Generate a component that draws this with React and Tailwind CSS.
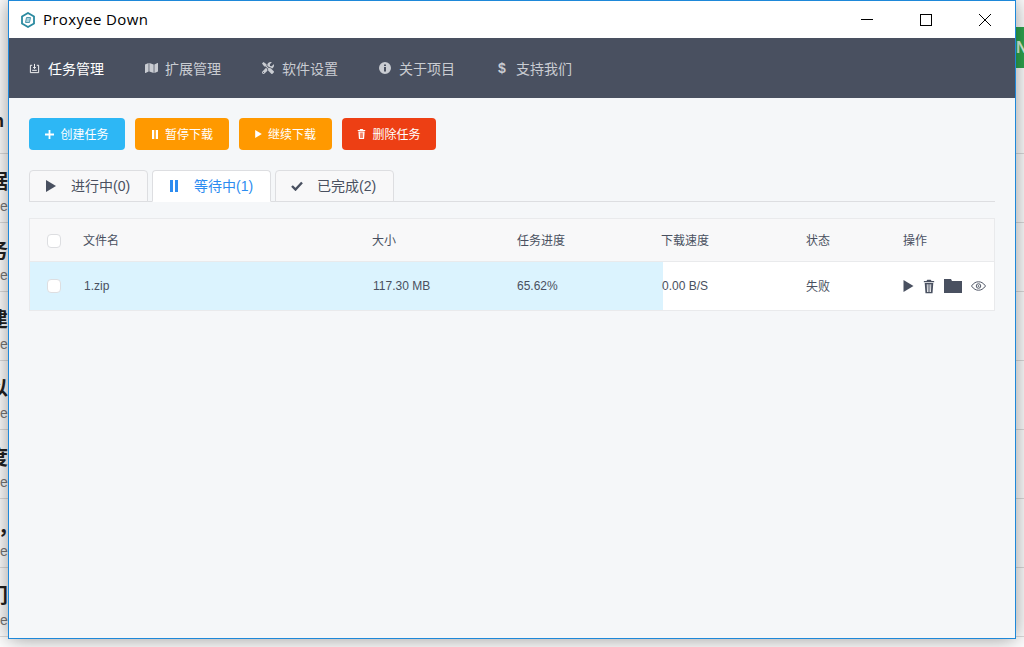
import React from "react";
import {FaMap, FaTools} from "react-icons/fa";

const cjk = "font-['Liberation_Sans','Noto_Sans_CJK_SC',sans-serif]";

// Background page rows that peek out behind the window
const behind = [
    {char: "据", offset: "-ml-[12px]"},
    {char: "务", offset: "-ml-[12px]"},
    {char: "建", offset: "-ml-[12px]"},
    {char: "以", offset: "-ml-[12px]"},
    {char: "度", offset: "-ml-[12px]"},
    {char: "，", offset: "-ml-[2px]"},
    {char: "门", offset: "-ml-[12px]"},
];

function PlayIcon({className}){
    return <svg viewBox="0 0 10 12" className={className} fill="currentColor"><path d="M0 0L10 6L0 12Z"/></svg>;
}

function PauseIcon({className}){
    return <svg viewBox="0 0 10 12" className={className} fill="currentColor"><path d="M1 0h3v12H1zM6 0h3v12H6z"/></svg>;
}

function TrashIcon({className}){
    return (
        <svg viewBox="0 0 14 16" className={className} fill="currentColor">
            <path d="M5 0h4l1 1.500h3V3H1V1.500h3zM2 4h10l-.9 12H2.900zM4.400 5.500l.3 9h1l-.3-9zM6.500 5.500v9h1v-9zM8.600 5.500l-.3 9h1l.3-9z" fillRule="evenodd"/>
        </svg>
    );
}

function NavItem({icon, label, active}){
    return (
        <div className={`flex items-center gap-[8px] ${active ? "text-white" : "text-[#c9ccd2]"}`}>
            <span className="flex w-[12px] justify-center">{icon}</span>
            <span className="pt-[1px] text-sm">{label}</span>
        </div>
    );
}

function ActionButton({color, icon, label, width}){
    return (
        <button className={`flex h-8 items-center justify-center gap-[6px] rounded text-xs text-white ${color} ${width}`}>
            {icon}
            <span className="pt-[1px]">{label}</span>
        </button>
    );
}

function Tab({icon, label, count, active}){
    return (
        <div className={`-mb-[1px] flex h-[32px] w-[119px] items-center gap-[15px] rounded-t border border-[#dddee1] pl-[16px] text-sm ${active ? "relative z-10 border-b-white bg-white text-[#2d8cf0]" : "bg-[#f8f8f9] text-[#495060]"}`}>
            <span className="flex w-[10px] justify-center">{icon}</span>
            <span>{label}{count}</span>
        </div>
    );
}

function Checkbox(){
    return <span className="block h-[14px] w-[14px] rounded-sm border border-[#dddee1] bg-white"></span>;
}

export default function App(){
    return (
        <div className={`relative h-[647px] w-[1024px] overflow-hidden bg-[#f7f7f8] ${cjk}`}>
            {/* Page behind the window */}
            <div className="flex h-full flex-col bg-white">
                <div className="flex h-[154px] flex-col justify-end border-b border-[#dcdcdc] pb-[18px]">
                    <span className="-ml-[7px] text-lg font-bold text-[#222]">h</span>
                </div>
                {behind.map((row)=>(
                    <div key={row.char} className="flex h-[69px] flex-col border-b border-[#dcdcdc] pt-[14px]">
                        <span className={`h-[28px] text-xl leading-[28px] font-bold text-[#222] ${row.offset}`}>{row.char}</span>
                        <span className="pt-[1px] text-sm leading-[18px] text-[#777]">e</span>
                    </div>
                ))}
            </div>

            {/* Green button on the page behind */}
            <div className="absolute top-[27px] right-0 flex h-[41px] w-[8px] items-center overflow-hidden bg-[#2ea64f] text-base font-bold text-[#d8f5df]">N</div>

            {/* Window */}
            <div className="absolute top-0 left-[8px] flex h-[639px] w-[1008px] flex-col border border-[#1e88d9] bg-[#f5f7f9] shadow-[0_0_20px_rgba(0,0,0,0.42)]">
                {/* Title bar */}
                <div className="flex h-[37px] items-center bg-white pl-[11px]">
                    <svg viewBox="0 0 16 16" className="h-[16px] w-[16px]" fill="none">
                        <path d="M8 1l6 3.500v7L8 15l-6-3.500v-7z" stroke="#2a8aa0" strokeWidth="1.800"/>
                        <path d="M5.500 10.500l1-5h4l-1 5z" fill="#a9d3de" stroke="#4f97ad" strokeWidth="1"/>
                    </svg>
                    <span className="ml-[7px] font-['Open_Sans',sans-serif] text-[15px] tracking-[0.35px] text-black">Proxyee Down</span>
                    <div className="ml-auto flex h-full items-center pr-[1px]">
                        <div className="flex w-[59px] justify-center"><span className="block h-[1px] w-[12px] bg-black"></span></div>
                        <div className="flex w-[59px] justify-center"><span className="block h-[12px] w-[12px] border border-black"></span></div>
                        <div className="flex w-[59px] justify-center">
                            <svg viewBox="0 0 12 12" className="h-[12px] w-[12px]" stroke="black" strokeWidth="1"><path d="M0 0L12 12M12 0L0 12"/></svg>
                        </div>
                    </div>
                </div>

                {/* Nav */}
                <div className="flex h-[60px] items-center gap-[41px] bg-[#495060] pl-[19px]">
                    <NavItem active label="任务管理" icon={
                        <svg viewBox="0 0 12 12" className="h-[11px] w-[11px]" fill="none" stroke="currentColor"><path d="M3.500 2.500H1.500v8h9v-8H8.500M6 1v5M4.500 4.500L6 6l1.500-1.500M3.500 8h5"/></svg>
                    }/>
                    <NavItem label="扩展管理" icon={<FaMap className="h-[12px] w-[13px] shrink-0"/>}/>
                    <NavItem label="软件设置" icon={<FaTools className="h-[12px] w-[12px] shrink-0"/>}/>
                    <NavItem label="关于项目" icon={
                        <svg viewBox="0 0 12 12" className="h-[12px] w-[12px]" fill="currentColor"><path fillRule="evenodd" d="M6 0a6 6 0 1 1 0 12A6 6 0 0 1 6 0zM5 2.500v1.500h2V2.500zM5 5v4.500h2V5z"/></svg>
                    }/>
                    <NavItem label="支持我们" icon={<span className="text-sm font-bold">$</span>}/>
                </div>

                {/* Content */}
                <div className="flex flex-1 flex-col px-[20px] pt-[20px]">
                    <div className="flex gap-[10px]">
                        <ActionButton color="bg-[#2db7f5]" width="w-[96px]" label="创建任务" icon={
                            <svg viewBox="0 0 10 10" className="h-[9px] w-[9px]" fill="currentColor"><path d="M4 0h2v4h4v2H6v4H4V6H0V4h4z"/></svg>
                        }/>
                        <ActionButton color="bg-[#ff9900]" width="w-[94px]" label="暂停下载" icon={<PauseIcon className="h-[9px] w-[8px]"/>}/>
                        <ActionButton color="bg-[#ff9900]" width="w-[93px]" label="继续下载" icon={<PlayIcon className="h-[8px] w-[7px]"/>}/>
                        <ActionButton color="bg-[#ed3f14]" width="w-[94px]" label="删除任务" icon={<TrashIcon className="h-[10px] w-[9px]"/>}/>
                    </div>

                    {/* Tabs */}
                    <div className="mt-[20px] flex h-[32px] gap-[4px] border-b border-[#dddee1]">
                        <Tab label="进行中" count="(0)" icon={<PlayIcon className="h-[12px] w-[10px]"/>}/>
                        <Tab active label="等待中" count="(1)" icon={<PauseIcon className="h-[12px] w-[10px]"/>}/>
                        <Tab label="已完成" count="(2)" icon={
                            <svg viewBox="0 0 12 10" className="h-[10px] w-[12px] shrink-0" fill="none" stroke="currentColor" strokeWidth="2.400"><path d="M1 5l3.500 3.500L11 1.500"/></svg>
                        }/>
                    </div>

                    {/* Table */}
                    <div className="mt-[16px] border border-[#e9eaec] text-xs text-[#495060]">
                        <div className="grid h-[43px] grid-cols-[53px_289px_145px_144px_145px_97px_1fr] items-center border-b border-[#e9eaec] bg-[#f8f8f9] [&>span]:pt-[1px]">
                            <span className="pl-[17px]"><Checkbox/></span>
                            <span>文件名</span>
                            <span>大小</span>
                            <span>任务进度</span>
                            <span>下载速度</span>
                            <span>状态</span>
                            <span>操作</span>
                        </div>
                        <div className="relative h-[48px] bg-white">
                            <div className="absolute inset-y-0 left-0 w-[633px] bg-[#dbf3fe]"></div>
                            <div className="relative grid h-full grid-cols-[53px_289px_145px_144px_145px_97px_1fr] items-center">
                                <span className="pl-[17px]"><Checkbox/></span>
                                <span className="pl-[1px]">1.zip</span>
                                <span className="pl-[1px]">117.30 MB</span>
                                <span>65.62%</span>
                                <span className="pl-[1px]">0.00 B/S</span>
                                <span className="pt-[1px]">失败</span>
                                <span className="flex items-center gap-[9px]">
                                    <PlayIcon className="h-[12px] w-[11px]"/>
                                    <TrashIcon className="h-[15px] w-[12px]"/>
                                    <svg viewBox="0 0 18 14" className="h-[14px] w-[18px]" fill="currentColor"><path d="M0 0h7l1 2h10v12H0z"/></svg>
                                    <svg viewBox="0 0 16 10" className="h-[10px] w-[15px]" fill="none" stroke="currentColor"><path d="M.5 5C3 1.500 5.500.5 8 .5S13 1.500 15.500 5C13 8.500 10.500 9.500 8 9.500S3 8.500.5 5z"/><circle cx="8" cy="5" r="2.400"/><circle cx="8" cy="5" r="0.900" fill="currentColor" stroke="none"/></svg>
                                </span>
                            </div>
                        </div>
                    </div>
                </div>
            </div>
        </div>
    );
}
